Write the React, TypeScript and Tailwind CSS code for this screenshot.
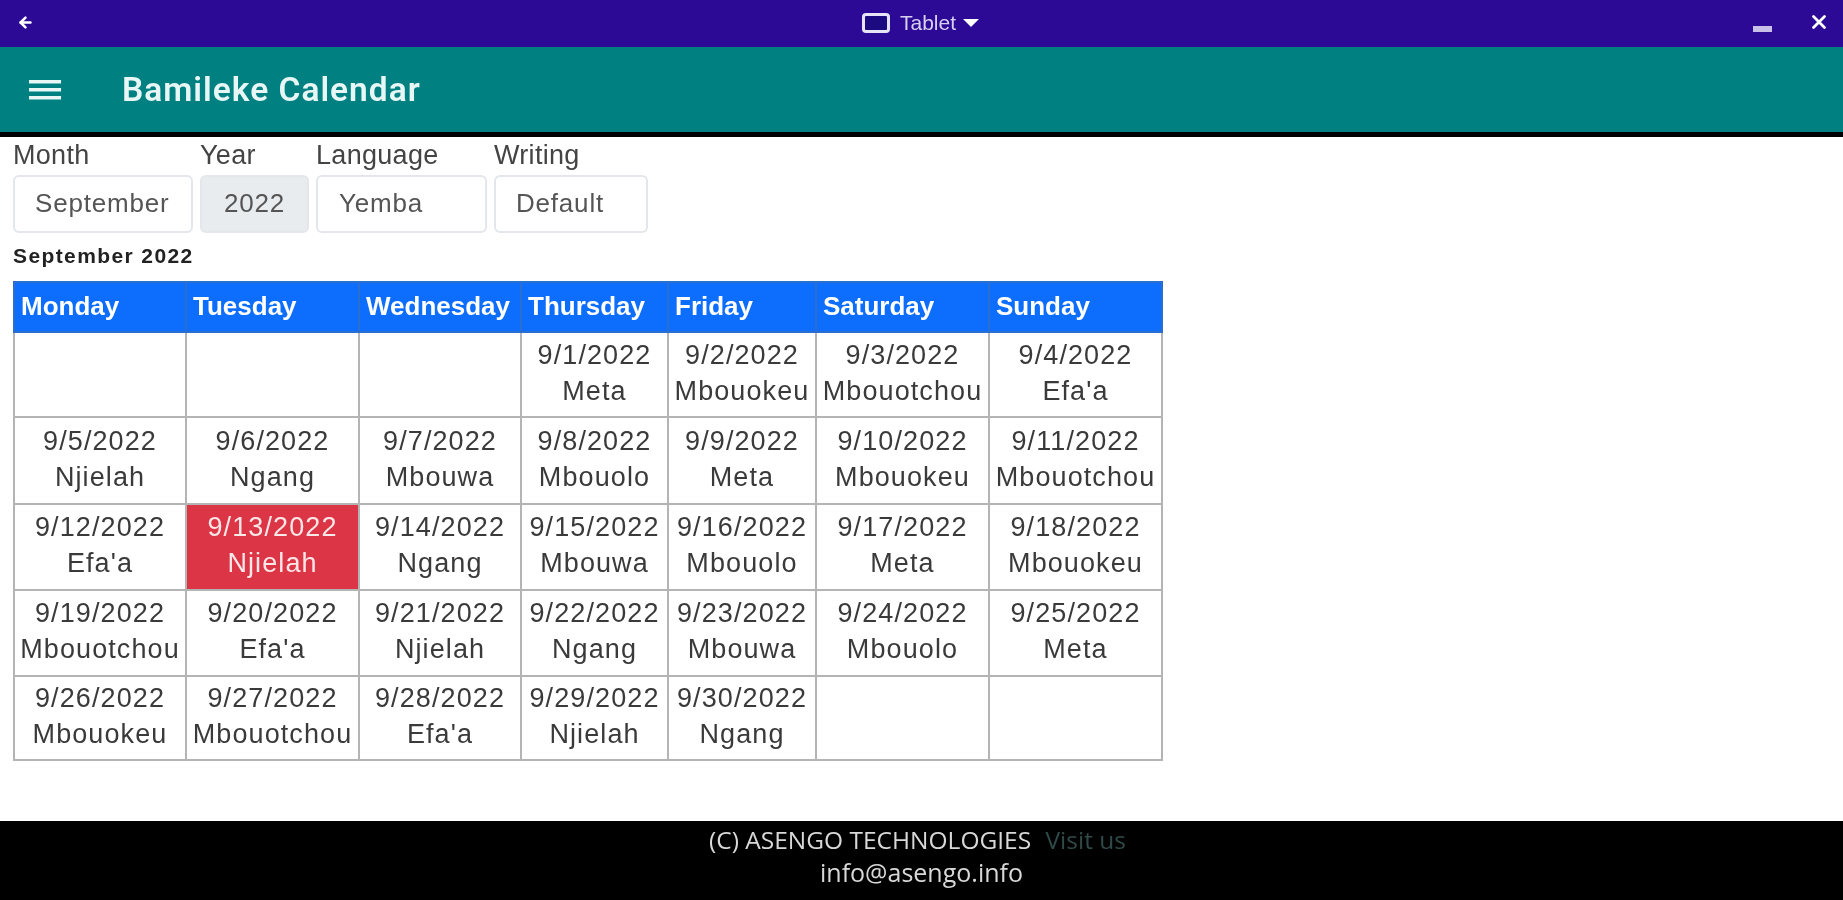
import { ArrowLeft, X } from 'lucide-react'

const days = ['Monday', 'Tuesday', 'Wednesday', 'Thursday', 'Friday', 'Saturday', 'Sunday']
const cycle = ['Meta', 'Mbouokeu', 'Mbouotchou', "Efa'a", 'Njielah', 'Ngang', 'Mbouwa', 'Mbouolo']
const colWidths = ['w-[172px]', 'w-[173px]', 'w-[162px]', 'w-[147px]', 'w-[148px]', 'w-[173px]', 'w-[173px]']
const rowHeights = ['h-[85px]', 'h-[87px]', 'h-[86px]', 'h-[86px]', 'h-[84px]']

// september 2022 starts on a thursday
const cells: (number | null)[] = [
  null, null, null,
  ...Array.from({ length: 30 }, (_, i) => i + 1),
  null, null,
]
const weeks = Array.from({ length: 5 }, (_, i) => cells.slice(i * 7, i * 7 + 7))

const selects = [
  { label: 'Month', value: 'September', width: 'w-[180px]', align: 'pl-[20px]', bg: 'bg-white' },
  { label: 'Year', value: '2022', width: 'w-[109px]', align: 'pl-[22px]', bg: 'bg-[#e9ecef]' },
  { label: 'Language', value: 'Yemba', width: 'w-[171px]', align: 'pl-[21px]', bg: 'bg-white' },
  { label: 'Writing', value: 'Default', width: 'w-[154px]', align: 'pl-[20px]', bg: 'bg-white' },
]

function TitleBar() {
  return (
    <div className="relative flex h-[47px] items-center justify-between bg-[#2c0a96] pl-[17px] pr-[13px] text-white">
      <ArrowLeft className="-mt-[3px] h-[17px] w-[17px]" strokeWidth={3.5} />
      <div className="absolute left-[862px] top-[12px] flex items-center">
        <div className="h-[20px] w-[28px] rounded-[4px] border-[3px] border-[#e8e4f8] bg-[#1c0a80]" />
        <span className="ml-[10px] text-[21px] leading-none text-[#d8d0f0] [font-family:'Liberation_Sans',sans-serif]">Tablet</span>
        <div className="ml-[7px] h-0 w-0 border-x-[8px] border-t-[8px] border-x-transparent border-t-white" />
      </div>
      <div className="flex items-center gap-[36px]">
        <div className="mt-[11px] h-[6px] w-[19px] bg-[#c8c0e8]" />
        <X className="-mt-[3px] h-[22px] w-[22px]" strokeWidth={3} />
      </div>
    </div>
  )
}

function AppBar() {
  return (
    <div className="flex h-[90px] items-center border-b-[5px] border-black bg-[#008080] pl-[29px] text-[#e6f7f5]">
      <svg viewBox="0 0 32 20" className="h-[20px] w-[32px]" fill="currentColor">
        <rect x="0" y="0" width="32" height="3.5" />
        <rect x="0" y="8" width="32" height="3.5" />
        <rect x="0" y="16" width="32" height="3.5" />
      </svg>
      <h1 className="ml-[61px] mt-[2px] text-[33.5px] font-semibold tracking-[1px] [font-family:Roboto,sans-serif]">Bamileke Calendar</h1>
    </div>
  )
}

function Footer() {
  return (
    <footer className="flex h-[79px] flex-col items-center bg-black pt-[2px] text-[24.5px] leading-[33px] text-[#d8d8d8] [font-family:'Open_Sans',sans-serif]">
      <p className="pr-[8px]">
        (C) ASENGO TECHNOLOGIES <span className="ml-2 text-[#2f4a48]">Visit us</span>
      </p>
      <p className="text-[25px]">info@asengo.info</p>
    </footer>
  )
}

export default function App() {
  return (
    <div className="flex h-[900px] flex-col overflow-hidden bg-white blur-[0.6px] [font-family:'Liberation_Sans',sans-serif]">
      <TitleBar />
      <AppBar />
      <main className="flex-1 px-[13px] pt-[3px] text-[#333]">
        <div className="flex gap-[7px]">
          {selects.map((s) => (
            <div key={s.label} className={s.width}>
              <div className="h-[35px] text-[27px] leading-[31px] tracking-[0.3px] text-[#444]">{s.label}</div>
              <div className={`flex h-[58px] items-center rounded-md border-2 border-[#e3e6ea] pb-[2px] text-[26px] tracking-[0.8px] text-[#555] ${s.align} ${s.bg}`}>
                {s.value}
              </div>
            </div>
          ))}
        </div>
        <h2 className="mt-[10px] h-[38px] text-[21px] font-bold leading-[26px] tracking-[1.4px] text-[#222]">September 2022</h2>
        <table className="w-[1148px] table-fixed border-collapse">
          <thead>
            <tr className="h-[50px] bg-[#0d6efd] text-white">
              {days.map((d, i) => (
                <th key={d} className={`border-2 border-[#2a6fd0] pb-[2px] pl-[6px] text-left text-[26px] font-bold whitespace-nowrap ${colWidths[i]}`}>
                  {d}
                </th>
              ))}
            </tr>
          </thead>
          <tbody>
            {weeks.map((week, w) => (
              <tr key={w} className={rowHeights[w]}>
                {week.map((day, i) => {
                  const today = day === 13
                  return (
                    <td
                      key={i}
                      className={`border-2 border-[#b4b4b4] pb-[4px] text-center text-[27px] leading-[36px] tracking-[1.1px] whitespace-nowrap ${today ? 'bg-[#dc3545] text-[#fbe6e8]' : 'text-[#3a3a3a]'}`}
                    >
                      {day && (
                        <>
                          <div>{`9/${day}/2022`}</div>
                          <div>{cycle[(day - 1) % 8]}</div>
                        </>
                      )}
                    </td>
                  )
                })}
              </tr>
            ))}
          </tbody>
        </table>
      </main>
      <Footer />
    </div>
  )
}
